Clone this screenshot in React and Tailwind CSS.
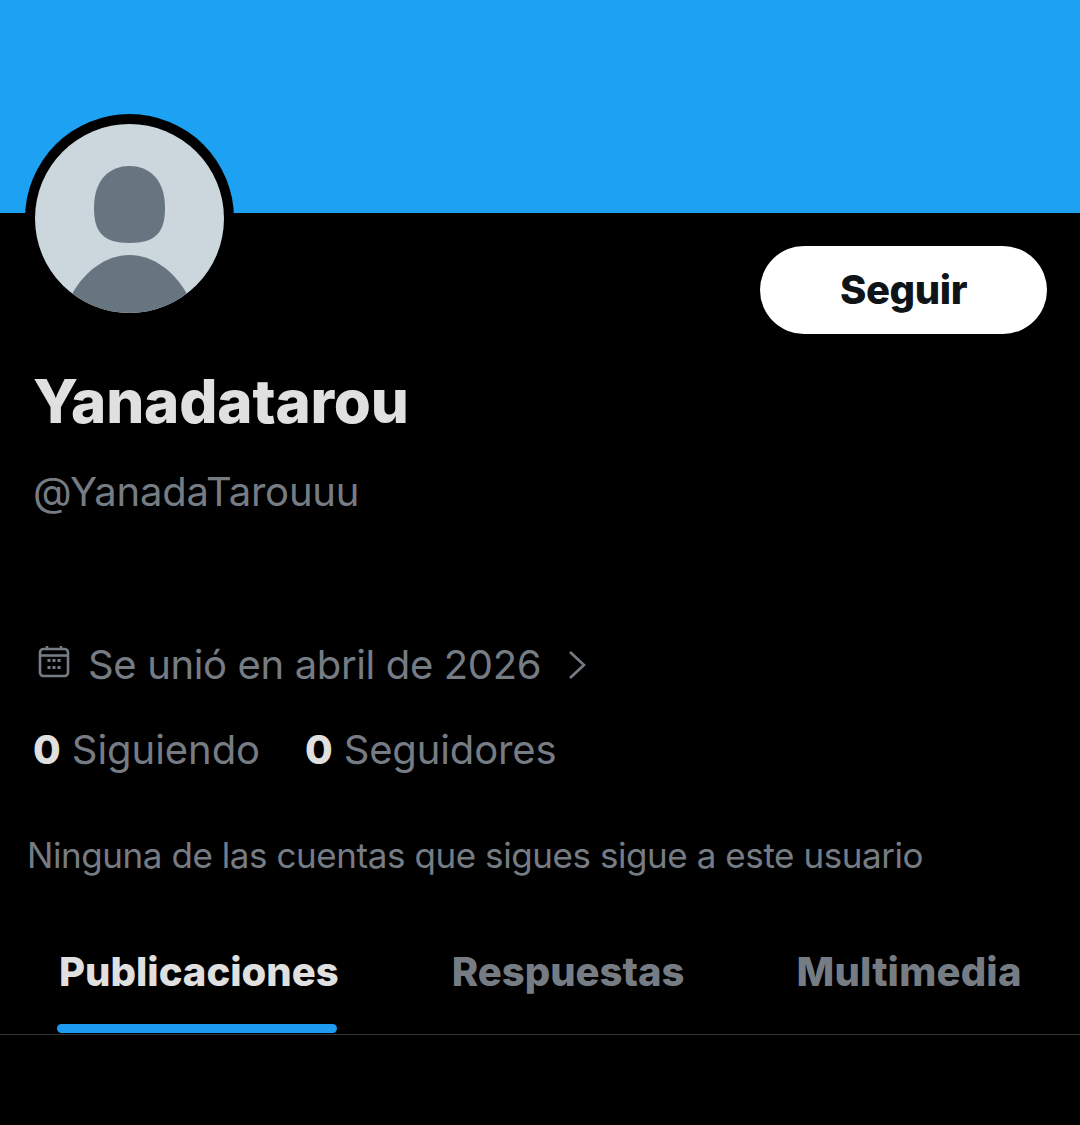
const FONT = "font-['Inter','Liberation_Sans',sans-serif]";

function DefaultAvatar() {
  return (
    <svg viewBox="0 0 189 189" className="block w-[189px] h-[189px] rounded-full">
      <rect width="189" height="189" fill="#ccd6dd" />
      <path
        d="M94.5 42C75 42 59 55 59 84C59 108 68 119 94.5 119C121 119 130 108 130 84C130 55 114 42 94.5 42Z"
        fill="#66757f"
      />
      <path
        d="M37 170C50 147 71 131 94.5 131C118 131 139 147 152 170C138 183 117 189 94.5 189C72 189 51 183 37 170Z"
        fill="#66757f"
      />
    </svg>
  );
}

function CalendarIcon() {
  return (
    <svg viewBox="0 0 32 32" className="w-[32px] h-[32px] shrink-0 -mt-[7px]" fill="none" stroke="#767c84" strokeWidth="2.6">
      <rect x="2" y="3" width="28" height="27" rx="3.5" />
      <path d="M2 9.5H30" />
      <path d="M9 0.5V3M23 0.5V3" strokeLinecap="round" />
      <g fill="#767c84" stroke="none">
        <rect x="9.5" y="13" width="3" height="3" />
        <rect x="14.5" y="13" width="3" height="3" />
        <rect x="19.5" y="13" width="3" height="3" />
        <rect x="9.5" y="20" width="3" height="3" />
        <rect x="14.5" y="20" width="3" height="3" />
        <rect x="19.5" y="20" width="3" height="3" />
      </g>
    </svg>
  );
}

function Chevron() {
  return (
    <svg viewBox="0 0 20 32" className="w-[20px] h-[32px]" fill="none" stroke="#767c84" strokeWidth="2.6">
      <path d="M3 3L17 16L3 29" />
    </svg>
  );
}

export default function App() {
  return (
    <div className={`${FONT} w-[1080px] h-[1125px] bg-black overflow-hidden`}>
      {/* BANNER */}
      <div className="h-[213px] bg-[#1da1f2]" />

      {/* AVATAR + BUTTON */}
      <div className="flex justify-between items-start pl-[25px] pr-[33px]">
        <div className="-mt-[99px] w-[209px] h-[209px] rounded-full bg-black p-[10px]">
          <DefaultAvatar />
        </div>
        <button className="mt-[33px] w-[287px] h-[88px] rounded-full bg-white text-[#0f1419] text-[40px] font-extrabold tracking-[-0.4px]">
          Seguir
        </button>
      </div>

      {/* NAME */}
      <div className="pl-[33px] mt-[31px] text-[60px] leading-[72px] font-extrabold text-[#e0e0e0] tracking-[-0.2px]">
        Yanadatarou
      </div>
      <div className="pl-[33px] mt-[31px] text-[40px] leading-[48px] text-[#767c84] tracking-[-0.2px]">
        @YanadaTarouuu
      </div>

      {/* JOINED */}
      <div className="flex items-center pl-[38px] mt-[125px] h-[48px] text-[40px] text-[#767c84] tracking-[-0.36px]">
        <CalendarIcon />
        <span className="ml-[18px]">Se unió en abril de 2026</span>
        <span className="ml-[26px]">
          <Chevron />
        </span>
      </div>

      {/* STATS */}
      <div className="flex pl-[33px] mt-[37px] h-[48px] leading-[48px] text-[40px] text-[#767c84] tracking-[-0.05px]">
        <span>
          <b className="text-[#e0e0e0] font-extrabold">0</b> Siguiendo
        </span>
        <span className="ml-[45px] tracking-[-0.15px]">
          <b className="text-[#e0e0e0] font-extrabold">0</b> Seguidores
        </span>
      </div>

      <div className="pl-[27px] mt-[59px] text-[35px] leading-[44px] text-[#767c84] tracking-[-0.43px] whitespace-nowrap">
        Ninguna de las cuentas que sigues sigue a este usuario
      </div>

      {/* TABS */}
      <div className="relative mt-[71px] h-[87px] border-b border-[#2f3336]">
        <div className="flex text-[40px] leading-[48px] font-extrabold text-[#767c84]">
          <span className="ml-[59px] text-[#e0e0e0]">Publicaciones</span>
          <span className="ml-[113px]">Respuestas</span>
          <span className="ml-[112px] tracking-[0.2px]">Multimedia</span>
        </div>
        <div className="absolute left-[57px] bottom-[1px] w-[280px] h-[9px] rounded-full bg-[#1d9bf0]" />
      </div>
    </div>
  );
}
